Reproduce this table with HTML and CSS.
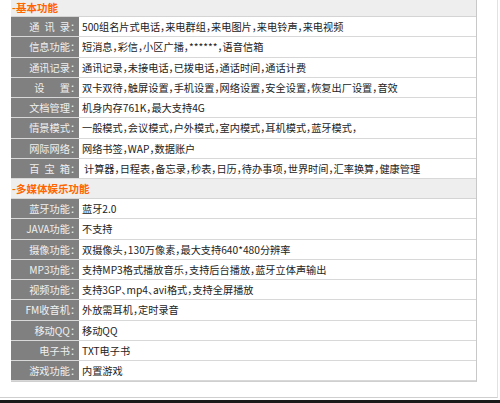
FILE: index.html
```html
<!DOCTYPE html>
<html lang="zh-CN">
<head>
<meta charset="utf-8">
<title>参数</title>
<link rel="stylesheet" href="styles.css">
</head>
<body>
<div class="page">
  <div class="spec">
    <div class="sec sec-first">-基本功能</div>
    <div class="row"><div class="k">通&ensp;讯&ensp;录：</div><div class="v">500组名片式电话，来电群组，来电图片，来电铃声，来电视频</div></div>
    <div class="row"><div class="k">信息功能：</div><div class="v">短消息，彩信，小区广播，******，语音信箱</div></div>
    <div class="row"><div class="k">通讯记录：</div><div class="v">通讯记录，未接电话，已拨电话，通话时间，通话计费</div></div>
    <div class="row"><div class="k">设&emsp;&ensp;置：</div><div class="v">双卡双待，触屏设置，手机设置，网络设置，安全设置，恢复出厂设置，音效</div></div>
    <div class="row"><div class="k">文档管理：</div><div class="v">机身内存761K，最大支持4G</div></div>
    <div class="row"><div class="k">情景模式：</div><div class="v">一般模式，会议模式，户外模式，室内模式，耳机模式，蓝牙模式，</div></div>
    <div class="row"><div class="k">网际网络：</div><div class="v">网络书签，WAP，数据账户</div></div>
    <div class="row"><div class="k">百&ensp;宝&ensp;箱：</div><div class="v v-indent">计算器，日程表，备忘录，秒表，日历，待办事项，世界时间，汇率换算，健康管理</div></div>
    <div class="sec">-多媒体娱乐功能</div>
    <div class="row"><div class="k">蓝牙功能：</div><div class="v">蓝牙2.0</div></div>
    <div class="row"><div class="k">JAVA功能：</div><div class="v">不支持</div></div>
    <div class="row"><div class="k">摄像功能：</div><div class="v">双摄像头，130万像素，最大支持640*480分辨率</div></div>
    <div class="row"><div class="k">MP3功能：</div><div class="v">支持MP3格式播放音乐，支持后台播放，蓝牙立体声输出</div></div>
    <div class="row"><div class="k">视频功能：</div><div class="v">支持3GP、mp4、avi格式，支持全屏播放</div></div>
    <div class="row"><div class="k">FM收音机：</div><div class="v">外放需耳机，定时录音</div></div>
    <div class="row"><div class="k">移动QQ：</div><div class="v">移动QQ</div></div>
    <div class="row"><div class="k">电子书：</div><div class="v">TXT电子书</div></div>
    <div class="row"><div class="k">游戏功能：</div><div class="v">内置游戏</div></div>
  </div>
</div>
<div class="bar"></div>
</body>
</html>
```
FILE: styles.css
```css
html, body {
  margin: 0;
  padding: 0;
  background: #fff;
}
body {
  width: 500px;
  height: 403px;
  overflow: hidden;
  font-family: "Noto Sans CJK SC", "Noto Sans", sans-serif;
  font-size: 10.2px;
  font-feature-settings: "halt";
}
.page {
  box-sizing: border-box;
  width: 498px;
  height: 398px;
  padding-left: 11px;
  border-right: 1px solid #e2e2e2;
  border-bottom: 1px solid #cfcfcf;
}
.spec {
  width: 466px;
  border-right: 1px solid #c8c8c8;
  border-bottom: 1px solid #cfcfcf;
  box-sizing: border-box;
}
.sec {
  box-sizing: border-box;
  height: 20px;
  line-height: 19px;
  padding-left: 1px;
  background: #eeeeee;
  border-bottom: 1px solid #d4d4d4;
  color: #ff6600;
  font-size: 10.5px;
  font-weight: bold;
}
.sec-first {
  height: 17px;
  line-height: 16px;
}
.row {
  box-sizing: border-box;
  height: 20.25px;
  display: grid;
  grid-template-columns: 68px 1fr;
  border-bottom: 1px solid #d8d8d8;
}
.k {
  background: #808080;
  color: #f0f0f0;
  text-align: right;
  padding-right: 4px;
  line-height: 19px;
  white-space: nowrap;
}
.v {
  padding-left: 3px;
  line-height: 19px;
  color: #222222;
  white-space: nowrap;
  overflow: hidden;
}
.v-indent {
  padding-left: 5px;
}
.bar {
  margin-top: 2px;
  height: 3px;
  background: #1a1a1a;
}
```
